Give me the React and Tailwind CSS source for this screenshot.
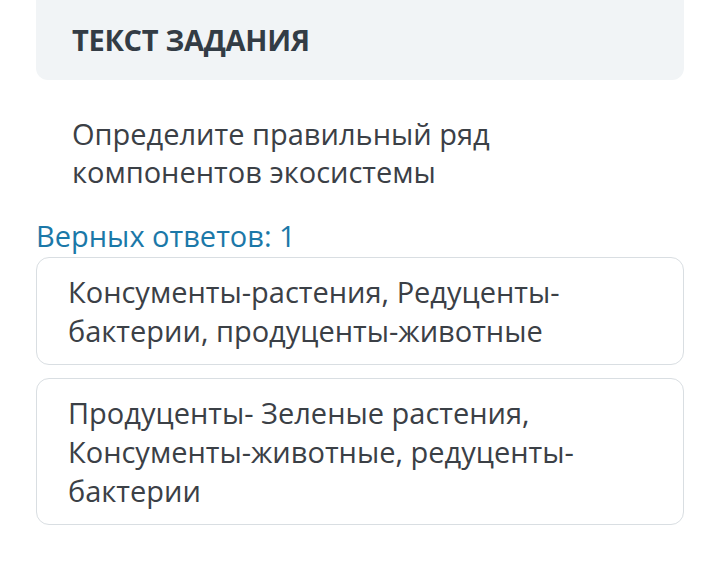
const answers = [
  "Консументы-растения, Редуценты-бактерии, продуценты-животные",
  "Продуценты- Зеленые растения, Консументы-животные, редуценты-бактерии",
];

export default function App() {
  return (
    <div className="min-h-[570px] w-[720px] bg-white font-['Open_Sans',sans-serif]">
      <div className="mx-[36px] flex h-[80px] items-center rounded-b-[12px] bg-[#f1f4f6] px-[36px]">
        <h1 className="text-[29px] font-bold tracking-[-0.3px] text-[#333c45]">
          ТЕКСТ ЗАДАНИЯ
        </h1>
      </div>

      <p className="mx-[36px] mt-[35px] w-[540px] px-[36px] text-[29px] leading-[38px] text-[#3b4046]">
        Определите правильный ряд компонентов экосистемы
      </p>

      <div className="mx-[36px] mt-[26px]">
        <p className="text-[29px] leading-[38px] text-[#1b78a8]">
          Верных ответов: 1
        </p>
        <div className="mt-[2px] flex flex-col gap-[13px]">
          {answers.map((a, i) => (
            <div
              key={i}
              className="rounded-[13px] border border-[#d9dee2] bg-white py-[14px] pl-[31px] pr-[90px] text-[29px] leading-[39px] text-[#3b4046]"
            >
              {a}
            </div>
          ))}
        </div>
      </div>
    </div>
  );
}
